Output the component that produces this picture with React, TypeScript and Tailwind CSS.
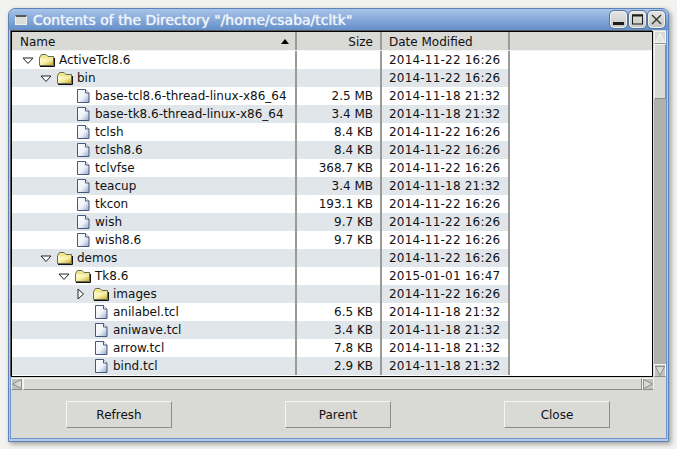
import React from "react";

const rows = [
  { name: "ActiveTcl8.6", level: 0, kind: "open", size: "", date: "2014-11-22 16:26" },
  { name: "bin", level: 1, kind: "open", size: "", date: "2014-11-22 16:26" },
  { name: "base-tcl8.6-thread-linux-x86_64", level: 2, kind: "file", size: "2.5 MB", date: "2014-11-18 21:32" },
  { name: "base-tk8.6-thread-linux-x86_64", level: 2, kind: "file", size: "3.4 MB", date: "2014-11-18 21:32" },
  { name: "tclsh", level: 2, kind: "file", size: "8.4 KB", date: "2014-11-22 16:26" },
  { name: "tclsh8.6", level: 2, kind: "file", size: "8.4 KB", date: "2014-11-22 16:26" },
  { name: "tclvfse", level: 2, kind: "file", size: "368.7 KB", date: "2014-11-22 16:26" },
  { name: "teacup", level: 2, kind: "file", size: "3.4 MB", date: "2014-11-18 21:32" },
  { name: "tkcon", level: 2, kind: "file", size: "193.1 KB", date: "2014-11-22 16:26" },
  { name: "wish", level: 2, kind: "file", size: "9.7 KB", date: "2014-11-22 16:26" },
  { name: "wish8.6", level: 2, kind: "file", size: "9.7 KB", date: "2014-11-22 16:26" },
  { name: "demos", level: 1, kind: "open", size: "", date: "2014-11-22 16:26" },
  { name: "Tk8.6", level: 2, kind: "open", size: "", date: "2015-01-01 16:47" },
  { name: "images", level: 3, kind: "closed", size: "", date: "2014-11-22 16:26" },
  { name: "anilabel.tcl", level: 3, kind: "file", size: "6.5 KB", date: "2014-11-18 21:32" },
  { name: "aniwave.tcl", level: 3, kind: "file", size: "3.4 KB", date: "2014-11-18 21:32" },
  { name: "arrow.tcl", level: 3, kind: "file", size: "7.8 KB", date: "2014-11-18 21:32" },
  { name: "bind.tcl", level: 3, kind: "file", size: "2.9 KB", date: "2014-11-18 21:32" },
];

const FolderIcon = () => (
  <svg width="18" height="14" viewBox="0 0 18 14" className="block">
    <defs>
      <linearGradient id="folder" x1="0" y1="0" x2="1" y2="1">
        <stop offset="0" stopColor="#fffde0" />
        <stop offset="0.5" stopColor="#f7efa6" />
        <stop offset="1" stopColor="#c4ac2c" />
      </linearGradient>
    </defs>
    <path d="M1.5 4.5 L3.5 1.5 H8 L10 3.5 H15.5 V12.5 H1.5 Z" fill="#efe58a" stroke="#6a6a58" />
    <path d="M2 5.5 H15 V12 H2 Z" fill="url(#folder)" />
    <path d="M2 13.5 H16.5 V5" fill="none" stroke="#111" />
  </svg>
);

const FileIcon = () => (
  <svg width="13" height="14" viewBox="0 0 13 14" className="block ml-[3px]">
    <defs>
      <linearGradient id="page" x1="0" y1="0" x2="1" y2="1">
        <stop offset="0" stopColor="#ffffff" />
        <stop offset="0.55" stopColor="#eef2f8" />
        <stop offset="1" stopColor="#8fa3c8" />
      </linearGradient>
    </defs>
    <path d="M0.5 0.5 H8.5 L12 4 V13.5 H0.5 Z" fill="url(#page)" stroke="#46587c" />
    <path d="M8.5 0.5 V4 H12" fill="#fff" stroke="#46587c" />
  </svg>
);

const Arrow = ({ kind }: { kind: string }) => (
  <span className="w-[21px] shrink-0 flex justify-center">
    {kind === "open" && (
      <svg width="12" height="8" viewBox="0 0 12 8" className="block mt-[1px]">
        <path d="M1 1 H11 L6 6.5 Z" fill="#fff" stroke="#222" />
      </svg>
    )}
    {kind === "closed" && (
      <svg width="8" height="12" viewBox="0 0 8 12" className="block -ml-[2px]">
        <path d="M1 1 V11 L6.5 6 Z" fill="#fff" stroke="#222" />
      </svg>
    )}
  </span>
);

const WinButton = ({ children }: { children: React.ReactNode }) => (
  <div className="w-[17px] h-[17px] rounded-[4px] bg-gradient-to-b from-[#e4e5e2] to-[#c6c8c4] border border-[#eef0ee] shadow-[0_0_0_1px_#56759f] flex items-center justify-center">
    <svg width="13" height="13" viewBox="0 0 13 13" className="block">
      {children}
    </svg>
  </div>
);

const Button = ({ label }: { label: string }) => (
  <button className="w-[106px] h-[27px] pt-[1px] bg-[#d9d9d6] border border-[#f4f4f2] border-r-[#8c8c88] border-b-[#8c8c88] text-[12px] text-[#111]">
    {label}
  </button>
);

export default function App() {
  return (
    <div className="w-[677px] h-[449px] bg-[#f2f2f0] pl-[8px] pt-[8px] font-['DejaVu_Sans',sans-serif] overflow-hidden">
      <div className="w-[661px] h-[434px] rounded-t-[7px] border border-[#5c82b8] bg-[#b4c9e8] px-[1px] pb-[2px] shadow-[2px_2px_5px_#9a9a98] flex flex-col">
        {/* title bar */}
        <div className="h-[21px] shrink-0 flex items-center -mx-[1px] rounded-t-[6px] bg-gradient-to-b from-[#a8c4ea] to-[#648fc8] pl-[5px] pr-[3px]">
          <div className="ml-[1px] w-[12px] h-[10px] bg-[#dcdcd8] border border-[#eef0ee] border-t-2 border-t-[#55595f]" />
          <span className="ml-[6px] text-[14px] leading-none tracking-[-0.02px] text-[#eef3fa] [text-shadow:0_0_1px_#ffffff]">
            Contents of the Directory "/home/csaba/tcltk"
          </span>
          <div className="ml-auto flex gap-[2px]">
            <WinButton>
              <rect x="1" y="9" width="11" height="3" fill="#1c1c1c" />
            </WinButton>
            <WinButton>
              <rect x="1.5" y="2" width="10" height="9" fill="none" stroke="#1c1c1c" />
              <rect x="1" y="1.5" width="11" height="2" fill="#1c1c1c" />
            </WinButton>
            <WinButton>
              <path d="M2 2 L11 11 M11 2 L2 11" stroke="#333" strokeWidth="1.4" />
            </WinButton>
          </div>
        </div>

        {/* content */}
        <div className="flex-1 bg-[#d9d9d6] border-x border-b border-[#6f93cc] border-t-0 flex flex-col min-h-0">
          <div className="flex mt-[1px]">
            <div className="w-[643px] h-[346px] border border-black shadow-[-1px_-1px_0_#5a5a58] bg-white overflow-hidden">
              <div className="flex h-[19px] bg-[#d9d9d6] border-b border-[#f4f4f2] text-[12px] text-[#111]">
                <div className="w-[285px] flex items-center justify-between pt-[1px] pl-[8px] pr-[6px] border-r-2 border-[#9a9a96]">
                  <span>Name</span>
                  <svg width="8" height="5" viewBox="0 0 8 5" className="block">
                    <path d="M0 5 L4 0 L8 5 Z" fill="#000" />
                  </svg>
                </div>
                <div className="w-[85px] flex items-center justify-end pt-[1px] pr-[7px] border-r-2 border-[#9a9a96]">Size</div>
                <div className="w-[128px] flex items-center pt-[1px] pl-[7px] border-r-2 border-[#9a9a96]">Date Modified</div>
              </div>
              {rows.map((row, i) => (
                <div key={row.name} className="flex h-[18px] text-[12px] text-[#111] leading-[18px]">
                  <div className={`w-[498px] flex ${i % 2 === 1 ? "bg-[#e0e6ea]" : "bg-white"}`}>
                    <div
                      className="w-[285px] flex items-center border-r-2 border-[#9a9a96]"
                      style={{ paddingLeft: 5 + row.level * 18 }}
                    >
                      <Arrow kind={row.kind} />
                      <span className="w-[21px] shrink-0">{row.kind === "file" ? <FileIcon /> : <FolderIcon />}</span>
                      <span className="whitespace-nowrap">{row.name}</span>
                    </div>
                    <div className="w-[85px] text-right pr-[7px] border-r-2 border-[#9a9a96]">{row.size}</div>
                    <div className="w-[128px] pl-[7px] tracking-[0.2px] whitespace-nowrap border-r-2 border-[#9a9a96]">{row.date}</div>
                  </div>
                </div>
              ))}
            </div>
            {/* vertical scrollbar */}
            <div className="w-[12px] ml-[1px] h-[346px] bg-[#b0b0ac] flex flex-col">
              <div className="h-[13px] bg-[#d9d9d6] border border-[#f4f4f2] border-b-[#8c8c88] flex items-center justify-center">
                <svg width="10" height="10" viewBox="0 0 10 10" className="block">
                  <path d="M0.5 9.5 L5 0.5 L9.5 9.5 Z" fill="#e4e4e1" stroke="#f4f4f2" />
                </svg>
              </div>
              <div className="h-[55px] bg-[#d9d9d6] border border-[#f4f4f2] border-r-[#8c8c88] border-b-[#8c8c88]" />
              <div className="flex-1" />
              <div className="h-[13px] bg-[#c2c2be] border border-[#f4f4f2] border-b-[#8c8c88] flex items-center justify-center">
                <svg width="10" height="10" viewBox="0 0 10 10" className="block">
                  <path d="M0.5 0.5 L5 9.5 L9.5 0.5 Z" fill="#d9d9d6" stroke="#8c8c88" />
                </svg>
              </div>
            </div>
          </div>
          {/* horizontal scrollbar */}
          <div className="h-[12px] mt-[1px] w-[643px] flex bg-[#b0b0ac]">
            <div className="w-[12px] bg-[#c2c2be] border border-[#f4f4f2] border-b-[#8c8c88] flex items-center justify-center">
              <svg width="10" height="10" viewBox="0 0 10 10" className="block">
                <path d="M9.5 0.5 L0.5 5 L9.5 9.5 Z" fill="#d9d9d6" stroke="#8c8c88" />
              </svg>
            </div>
            <div className="flex-1 bg-[#d9d9d6] border border-[#f4f4f2] border-r-[#8c8c88] border-b-[#8c8c88]" />
            <div className="w-[12px] bg-[#c2c2be] border border-[#f4f4f2] border-b-[#8c8c88] flex items-center justify-center">
              <svg width="10" height="10" viewBox="0 0 10 10" className="block">
                <path d="M0.5 0.5 L9.5 5 L0.5 9.5 Z" fill="#d9d9d6" stroke="#8c8c88" />
              </svg>
            </div>
          </div>
          {/* buttons */}
          <div className="flex-1 flex items-start justify-between pt-[11px] pl-[55px] pr-[56px]">
            <Button label="Refresh" />
            <Button label="Parent" />
            <Button label="Close" />
          </div>
        </div>
      </div>
    </div>
  );
}
